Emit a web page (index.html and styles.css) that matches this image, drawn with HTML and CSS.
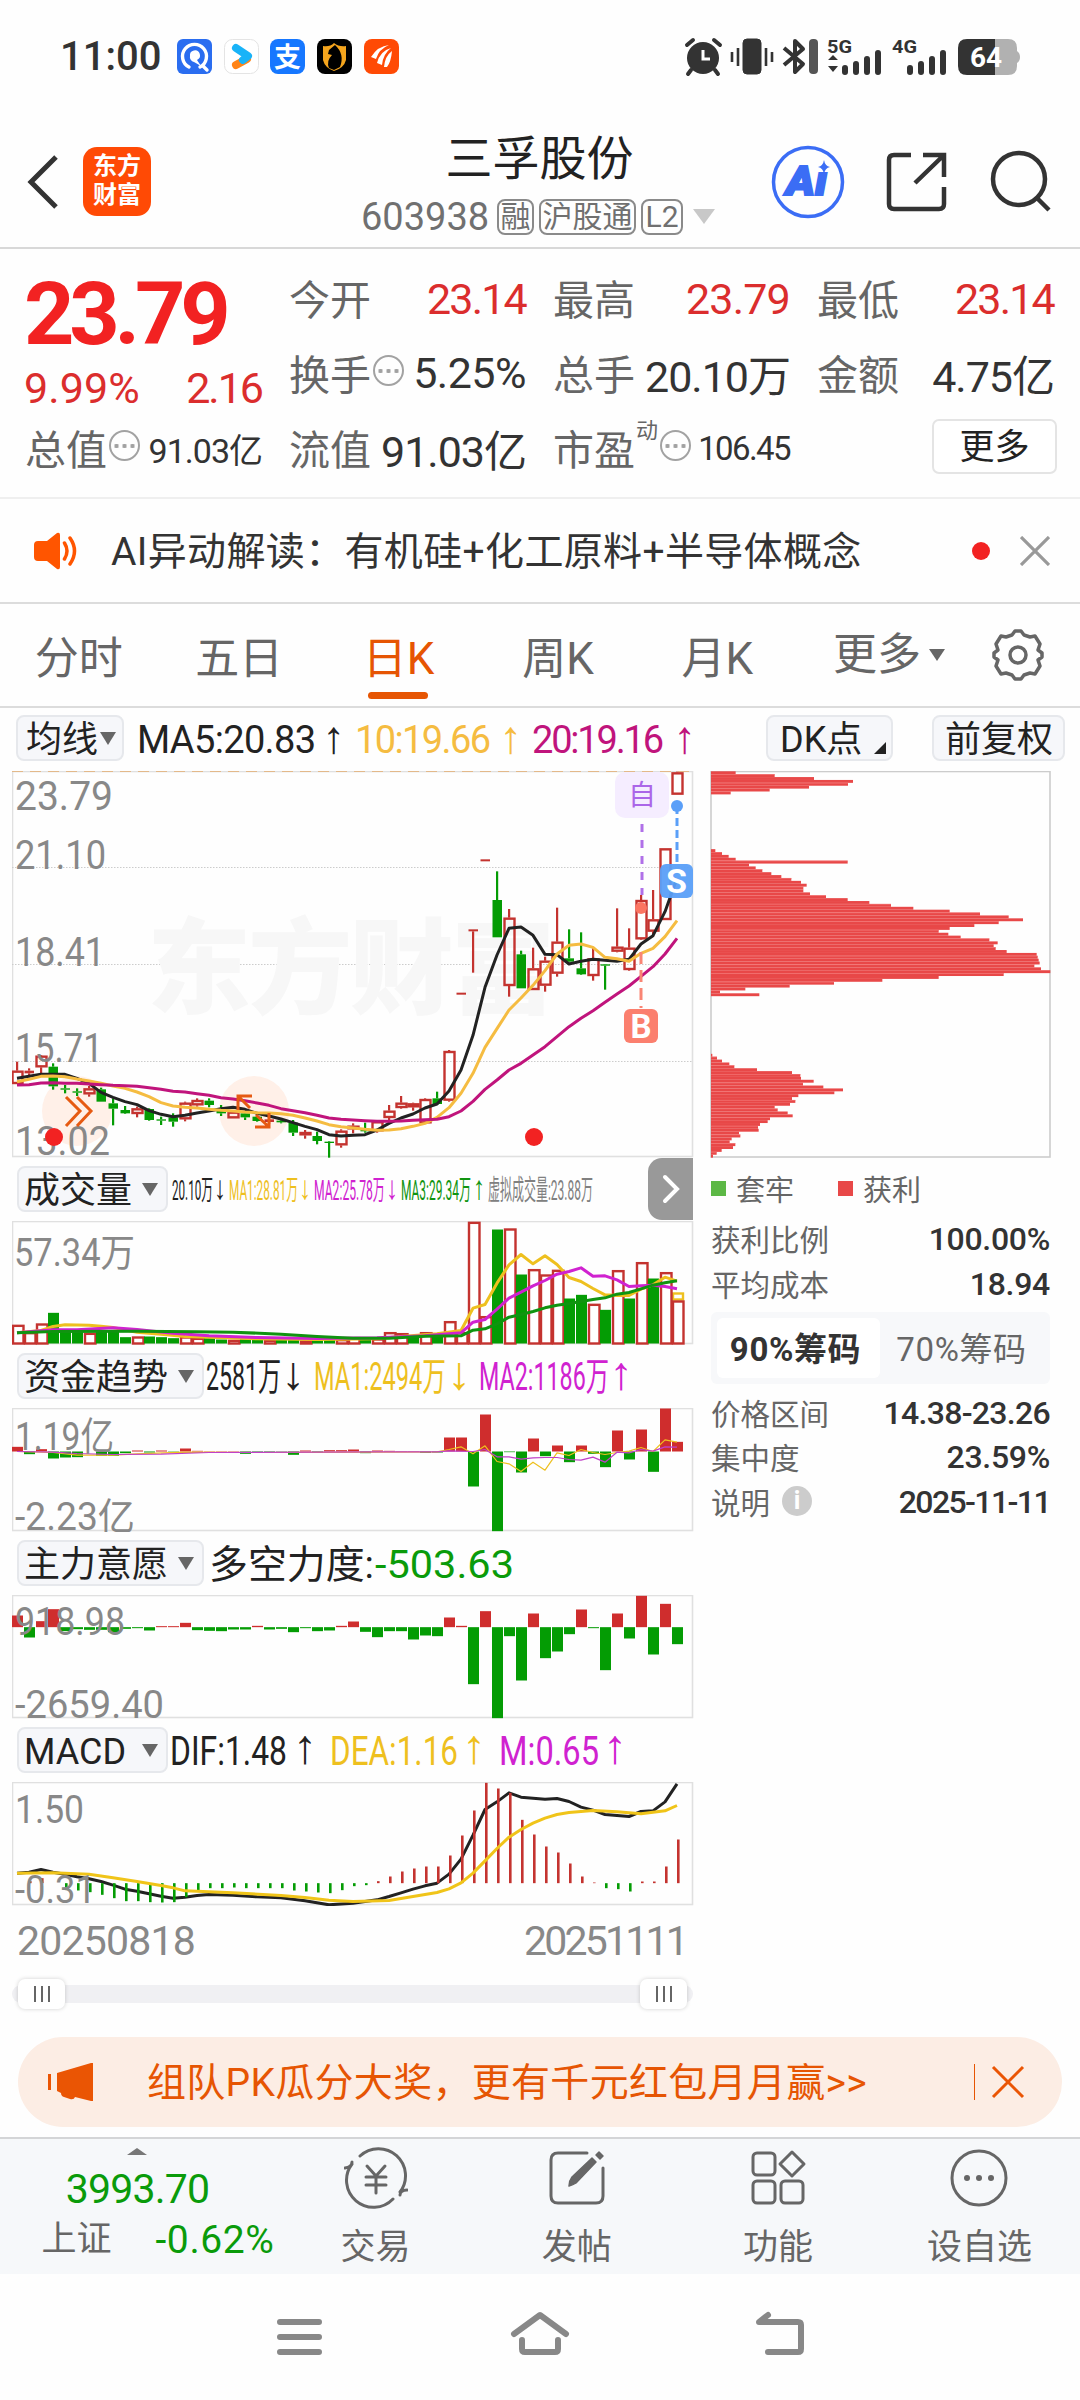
FILE: index.html
```html
<!DOCTYPE html>
<html lang="zh-CN">

<head>
    <meta charset="UTF-8">
    <meta name="viewport" content="width=device-width, initial-scale=1.0">
    <title>三孚股份 603938</title>
    <link rel="stylesheet" href="styles.css">
</head>

<body>
    <!-- phone status bar -->
    <section class="status">
        <span class="clock">11:00</span>
        <svg class="status-apps" viewBox="170 30 240 55">
            <rect x="177" y="39" width="35" height="35" rx="6" fill="#2a6df0" />
            <path d="M189 67A12 12 0 1 1 200 67M203 66l4 4" fill="none" stroke="#fff" stroke-width="3.4" stroke-linecap="round" />
            <path d="M190 56a5 5 0 1 1 7 4l4 6-7-4a5 5 0 0 1-4-6z" fill="#fff" />
            <rect x="224.500" y="39.500" width="34" height="34" rx="8" fill="#fff" stroke="#e4e4e4" />
            <path d="M236 65l11-6" stroke="#ff8417" stroke-width="8" stroke-linecap="round" />
            <path d="M236 48l12 8-5 4" stroke="#19b3f8" stroke-width="8" stroke-linecap="round" stroke-linejoin="round" fill="none" />
            <rect x="270" y="39" width="35" height="35" rx="8" fill="#1677ff" />
            <text x="287.500" y="67" font-size="27" font-weight="bold" fill="#fff" text-anchor="middle">支</text>
            <rect x="317" y="39" width="35" height="35" rx="8" fill="#000" />
            <path d="M323 46q7 1 11-3 5 4 12 3v14q-2 8-12 11-9-3-11-11z" fill="#f5a51d" />
            <path d="M335 45l-6 5-1 4 4 1q-6 6-3 13l5 2 6-3q5-13-5-22z" fill="#000" />
            <rect x="364" y="39" width="35" height="35" rx="8" fill="#ff4a05" />
            <path d="M371 57q7-11 18-12-10 4-13 14zM377 63q3-12 14-15-8 6-9 17zM384 67q1-11 8-16-1 11-5 16z" fill="#fff" />
        </svg>
        <svg class="status-icons" viewBox="680 30 350 55">
            <g stroke="#333" fill="#333">
                <circle cx="703" cy="58" r="16" stroke="none" />
                <path d="M687 45l6-5M720 45l-6-5M691 70l-3 4M715 70l3 4" stroke-width="4" stroke-linecap="round" />
                <path d="M703 50v9h7" stroke="#fff" stroke-width="3" fill="none" />
                <rect x="743" y="39" width="18" height="35" rx="4" />
                <path d="M732 52v10M738 48v18M766 48v18M772 52v10" stroke-width="2.600" />
                <path d="M784 48l19 16-8 8V41l8 8-19 16" fill="none" stroke-width="4" stroke-linejoin="round" />
                <rect x="809" y="39" width="9" height="35" rx="4" fill="#555" stroke="none" />
                <path d="M828 60l5-5 5 5zM828 66l5 6 5-6z" stroke="none" />
                <path d="M845 68v4M856 64v8M867 59v13M878 53v19M910 68v4M921 64v8M932 59v13M943 53v19" stroke-width="6" stroke-linecap="round" />
            </g>
            <text class="net" x="827" y="53" textLength="25" lengthAdjust="spacingAndGlyphs">5G</text>
            <text class="net" x="892" y="53" textLength="25" lengthAdjust="spacingAndGlyphs">4G</text>
            <path d="M995 39h13q9 0 9 9v3q3 2 3 6t-3 6v3q0 9-9 9h-13z" fill="#b1b1b1" />
            <path d="M967 39h28v36h-28q-9 0-9-9V48q0-9 9-9z" fill="#333" />
            <text x="970" y="67" font-size="28" font-weight="bold" fill="#fff" textLength="32">64</text>
        </svg>
    </section>

    <!-- stock title -->
    <header class="header">
        <svg class="back" viewBox="0 0 32 54"><path d="M29 2L4 27l25 25" /></svg>
        <div class="logo"><span>东方</span><span>财富</span></div>
        <div class="title">
            <h1>三孚股份</h1>
            <div class="code">
                <span>603938</span><em>融</em><em>沪股通</em><em>L2</em><i></i>
            </div>
        </div>
        <svg class="header-icons" viewBox="765 140 300 85">
            <circle cx="808" cy="182" r="34.500" fill="none" stroke="#3b6df5" stroke-width="3.500" />
            <text x="786" y="195" font-size="40" font-weight="900" font-style="italic" fill="#3b6df5" stroke="#3b6df5" stroke-width="2" textLength="41" lengthAdjust="spacingAndGlyphs">Aı</text>
            <path d="M824 160q1 6 6 7-5 1-6 7-1-6-6-7 5-1 6-7z" fill="#3b6df5" />
            <g fill="none" stroke="#333" stroke-width="4.500">
                <path d="M911 155h-17q-5 0-5 5v44q0 5 5 5h45q5 0 5-5v-17M915 183l29-28M923 155h21v22" />
                <circle cx="1019" cy="179" r="26" />
                <path d="M1037 198l12 12" />
            </g>
        </svg>
    </header>

    <section class="quote">
        <div class="quote-main">
            <strong>23.79</strong>
            <p class="change"><span>9.99%</span><span>2.16</span></p>
            <div class="cell small"><label>总值</label><i class="tip"></i><span>91.03亿</span></div>
        </div>
        <div class="quote-grid">
            <div class="cell up"><label>今开</label><span>23.14</span></div>
            <div class="cell up high"><label>最高</label><span>23.79</span></div>
            <div class="cell up"><label>最低</label><span>23.14</span></div>
            <div class="cell"><label>换手</label><i class="tip"></i><span>5.25%</span></div>
            <div class="cell"><label>总手</label><span>20.10万</span></div>
            <div class="cell"><label>金额</label><span>4.75亿</span></div>
            <div class="cell"><label>流值</label><span>91.03亿</span></div>
            <div class="cell small pe"><label>市盈<sup>动</sup></label><i class="tip"></i><span>106.45</span></div>
            <div class="cell"><button class="more">更多</button></div>
        </div>
    </section>

    <section class="news">
        <svg width="48" height="40" viewBox="0 0 48 40">
            <path d="M5 10h9L24 2q3-1 3 2v32q0 3-3 2L14 30H5q-4 0-4-4V14q0-4 4-4z" fill="#ff5500" />
            <path d="M31.500 12q5 8 0 16M37 7q9 13 0 26" fill="none" stroke="#ff5500" stroke-width="3.500" stroke-linecap="round" />
        </svg>
        <p>AI异动解读：有机硅+化工原料+半导体概念</p>
        <i class="dot"></i>
        <svg width="30" height="30" viewBox="0 0 30 30"><path d="M1 1l28 28M29 1L1 29" stroke="#999" stroke-width="3.200" /></svg>
    </section>

    <nav class="periods">
        <a>分时</a>
        <a>五日</a>
        <a class="active">日K</a>
        <a>周K</a>
        <a>月K</a>
        <a class="drop">更多<i></i></a>
        <svg width="54" height="54" viewBox="-27 -27 54 54">
            <path d="M-6-20L-3-24H3L6-20L12-18L17-19L22-11L20-5L24-2V2L20 5L22 11L17 19L12 18L6 20L3 24H-3L-6 20L-12 18L-17 19L-22 11L-20 5L-24 2V-2L-20-5L-22-11L-17-19L-12-18Z" fill="none" stroke="#666" stroke-width="3.500" stroke-linejoin="round" />
            <circle r="8" fill="none" stroke="#666" stroke-width="3.500" />
        </svg>
    </nav>

    <section class="ma-row">
        <button class="pick tight">均线<i></i></button>
        <svg class="ma-legend" viewBox="130 708 570 62">
            <g font-size="38">
                <text x="137" y="753" textLength="179" fill="#222">MA5:20.83</text>
                <text class="ar" x="334" y="753" fill="#222">↑</text>
                <text x="355" y="753" textLength="136" fill="#f5bc41">10:19.66</text>
                <text class="ar" x="511" y="753" fill="#f5bc41">↑</text>
                <text x="532" y="753" textLength="132" fill="#c0147c">20:19.16</text>
                <text class="ar" x="685" y="753" fill="#c0147c">↑</text>
            </g>
        </svg>
        <button class="pick corner">DK点<i></i></button>
        <button class="pick plain">前复权</button>
    </section>

    <main class="board">
        <div class="charts">
            <svg id="kline" class="chart-main" viewBox="12 771 682 387"></svg>

            <div class="tool">
                <button class="pick w3">成交量<i></i></button>
                <svg class="legend" viewBox="169 1158 480 62">
                    <g font-size="28">
                        <text x="172" y="1200" textLength="41" lengthAdjust="spacingAndGlyphs" fill="#222">20.10万</text>
                        <text class="ar" x="220" y="1199" textLength="12" lengthAdjust="spacingAndGlyphs" fill="#222">↓</text>
                        <text x="229" y="1200" textLength="69" lengthAdjust="spacingAndGlyphs" fill="#eec01f">MA1:28.81万</text>
                        <text class="ar" x="305" y="1199" textLength="12" lengthAdjust="spacingAndGlyphs" fill="#eec01f">↓</text>
                        <text x="314" y="1200" textLength="71" lengthAdjust="spacingAndGlyphs" fill="#d022d0">MA2:25.78万</text>
                        <text class="ar" x="392" y="1199" textLength="12" lengthAdjust="spacingAndGlyphs" fill="#d022d0">↓</text>
                        <text x="401" y="1200" textLength="70" lengthAdjust="spacingAndGlyphs" fill="#109410">MA3:29.34万</text>
                        <text class="ar" x="479" y="1199" textLength="12" lengthAdjust="spacingAndGlyphs" fill="#109410">↑</text>
                        <text x="488" y="1200" textLength="105" lengthAdjust="spacingAndGlyphs" fill="#808080">虚拟成交量:23.88万</text>
                    </g>
                </svg>
                <div class="expand"><svg width="18" height="30" viewBox="0 0 18 30"><path d="M3 3l12 12L3 27" /></svg></div>
            </div>
            <svg id="volume" class="chart-sub" viewBox="12 1220.500 682 124"></svg>

            <div class="tool">
                <button class="pick w4">资金趋势<i></i></button>
                <svg class="legend" viewBox="205 1345 480 62">
                    <g font-size="39">
                        <text x="206" y="1390" textLength="75" lengthAdjust="spacingAndGlyphs" fill="#222">2581万</text>
                        <text class="ar" x="293" y="1389" fill="#222">↓</text>
                        <text x="314" y="1390" textLength="132" lengthAdjust="spacingAndGlyphs" fill="#eec01f">MA1:2494万</text>
                        <text class="ar" x="459" y="1389" fill="#eec01f">↓</text>
                        <text x="479" y="1390" textLength="130" lengthAdjust="spacingAndGlyphs" fill="#d022d0">MA2:1186万</text>
                        <text class="ar" x="621" y="1389" fill="#d022d0">↑</text>
                    </g>
                </svg>
            </div>
            <svg id="fund" class="chart-sub" viewBox="12 1407.500 682 124"></svg>

            <div class="tool">
                <button class="pick w4">主力意愿<i></i></button>
                <svg class="legend" viewBox="205 1532 480 62">
                    <g font-size="39">
                        <text x="209" y="1578" textLength="165" lengthAdjust="spacingAndGlyphs" fill="#222">多空力度:</text>
                        <text x="375" y="1578" textLength="139" lengthAdjust="spacingAndGlyphs" fill="#0a9b0a">-503.63</text>
                    </g>
                </svg>
            </div>
            <svg id="force" class="chart-sub" viewBox="12 1594.500 682 124"></svg>

            <div class="tool">
                <button class="pick w3">MACD<i></i></button>
                <svg class="legend" viewBox="169 1719 480 62">
                    <g font-size="40">
                        <text x="170" y="1765" textLength="117" lengthAdjust="spacingAndGlyphs" fill="#222">DIF:1.48</text>
                        <text class="ar" x="305" y="1763" fill="#222">↑</text>
                        <text x="330" y="1765" textLength="128" lengthAdjust="spacingAndGlyphs" fill="#eec01f">DEA:1.16</text>
                        <text class="ar" x="474" y="1763" fill="#eec01f">↑</text>
                        <text x="499" y="1765" textLength="100" lengthAdjust="spacingAndGlyphs" fill="#d022d0">M:0.65</text>
                        <text class="ar" x="615" y="1763" fill="#d022d0">↑</text>
                    </g>
                </svg>
            </div>
            <svg id="macd" class="chart-sub" viewBox="12 1781.500 682 124"></svg>

            <div class="dates"><span>20250818</span><span>20251111</span></div>
            <div class="range">
                <div class="handle"><i></i><i></i><i></i></div>
                <div class="handle"><i></i><i></i><i></i></div>
            </div>
        </div>

        <aside class="chips">
            <svg id="chips" viewBox="710 771 342 387"></svg>
            <div class="chip-legend"><i class="green"></i><span>套牢</span><i class="red"></i><span>获利</span></div>
            <div class="chip-row"><span>获利比例</span><b>100.00%</b></div>
            <div class="chip-row"><span>平均成本</span><b>18.94</b></div>
            <div class="toggle"><span class="on">90%筹码</span><span>70%筹码</span></div>
            <div class="chip-row"><span>价格区间</span><b>14.38-23.26</b></div>
            <div class="chip-row"><span>集中度</span><b>23.59%</b></div>
            <div class="chip-row"><span>说明<i class="info">i</i></span><b>2025-11-11</b></div>
        </aside>
    </main>

    <section class="promo">
        <svg width="48" height="42" viewBox="0 0 48 42">
            <path d="M10 12L44 2h2v38h-2l-16-4q-1 3-5 2l-6-2q-3-1-3-4l-4-2zM1 13h3v16H1z" fill="#ea5504" />
        </svg>
        <p>组队PK瓜分大奖，更有千元红包月月赢&gt;&gt;</p>
        <i></i>
        <svg width="34" height="34" viewBox="0 0 34 34"><path d="M2 2l30 30M32 2L2 32" stroke="#ea5504" stroke-width="3" /></svg>
    </section>

    <nav class="tabs">
        <div class="index">
            <i></i>
            <strong>3993.70</strong>
            <p><span>上证</span><b>-0.62%</b></p>
        </div>
        <a>
            <svg viewBox="-32 -32 64 64">
                <path d="M-16-22A27 27 0 0 1 24 14M17 21A27 27 0 0 1-24-14M-31-10q7-1 7-6M31 12q-7 0-7 5" />
                <path d="M-9-12L0-2 9-12M0-2V15M-10-1H10M-10 7H10" />
            </svg>
            交易
        </a>
        <a>
            <svg viewBox="-32 -32 64 64">
                <path d="M10-25H-19q-7 0-7 7V18q0 7 7 7H19q7 0 7-7V-10" />
                <path d="M-8 8q0-5 3-9L15-20l4 4-20 21q-3 2-7 3zM19-23l3-3 4 4-3 3z" fill="#666" stroke-width="1.500" />
            </svg>
            发帖
        </a>
        <a>
            <svg viewBox="-32 -32 64 64">
                <rect x="-25" y="-25" width="22" height="22" rx="4" />
                <rect x="-25" y="3" width="22" height="22" rx="4" />
                <rect x="3" y="3" width="22" height="22" rx="4" />
                <path d="M14-26L26-14 14-2 2-14z" />
            </svg>
            功能
        </a>
        <a>
            <svg viewBox="-32 -32 64 64">
                <circle r="27" />
                <g fill="#666" stroke="none"><circle cx="-12" r="3" /><circle r="3" /><circle cx="12" r="3" /></g>
            </svg>
            设自选
        </a>
    </nav>

    <!-- system buttons -->
    <section class="sysnav">
        <svg viewBox="260 2300 560 70">
            <path d="M280 2322h39M280 2337h39M280 2352h39" />
            <path d="M514 2334l26-19 26 19M522 2340v9q0 3 3 3h30q3 0 3-3v-9" />
            <path d="M768 2352h30q3 0 3-3v-24q0-3-3-3h-39l9-7" />
        </svg>
    </section>

    <script src="charts.js"></script>
</body>

</html>
```

FILE: styles.css
```css
* {
    box-sizing: border-box;
    margin: 0;
    padding: 0;
}

body {
    width: 1080px;
    height: 2400px;
    background: #fefefe;
    color: #333;
    font-family: Roboto, "Noto Sans CJK SC", sans-serif;
    overflow: hidden;
}

svg {
    display: block;
    flex: none;
}

button {
    font-family: inherit;
    color: #222;
}

i,
em {
    font-style: normal;
}

/* status bar */
.status {
    height: 112px;
    display: flex;
    align-items: flex-start;
    padding: 30px 50px 0 60px;
}

.clock {
    width: 110px;
    font-size: 40px;
    line-height: 54px;
    font-weight: 500;
}

.status-apps {
    width: 240px;
    height: 55px;
}

.status-icons {
    width: 350px;
    height: 55px;
    margin-left: auto;
}

.net {
    font-size: 19px;
    font-weight: bold;
    fill: #333;
}

/* header */
.header {
    height: 137px;
    display: flex;
    align-items: flex-start;
    border-bottom: 2px solid #d8d8d8;
}

.back {
    width: 32px;
    height: 54px;
    margin: 43px 24px 0 27px;
}

.back path {
    fill: none;
    stroke: #333;
    stroke-width: 5;
}

.logo {
    width: 68px;
    height: 69px;
    margin-top: 35px;
    padding-top: 5px;
    border-radius: 14px;
    background: #ff4a05;
    color: #fff;
    font-size: 24px;
    line-height: 29px;
    font-weight: bold;
    display: flex;
    flex-direction: column;
    align-items: center;
}

.title {
    flex: none;
    width: 357px;
    margin-left: 210px;
    padding-top: 17px;
}

.title h1 {
    text-align: center;
    font-size: 47px;
    line-height: 60px;
    font-weight: 400;
    color: #222;
}

.code {
    display: flex;
    align-items: center;
    gap: 5px;
    height: 55px;
    color: #707070;
    font-size: 38px;
}

.code span {
    width: 131px;
}

.code em {
    flex: none;
    width: 37px;
    height: 36px;
    border: 2px solid #8a8a8a;
    border-radius: 8px;
    font-size: 30px;
    line-height: 32px;
    text-align: center;
    white-space: nowrap;
}

.code em:nth-of-type(2) {
    width: 97px;
}

.code em:nth-of-type(3) {
    width: 42px;
}

.code i {
    margin-left: 5px;
    border: 11px solid transparent;
    border-top: 15px solid #c8c8c8;
    border-bottom: 0;
}

.header-icons {
    width: 300px;
    height: 85px;
    margin: 28px 0 0 47px;
}

/* quote */
.quote {
    height: 250px;
    display: flex;
    gap: 27px;
    padding: 10px 26px 0;
    border-bottom: 2px solid #efefef;
}

.quote-main {
    width: 237px;
}

.quote-main strong {
    display: block;
    height: 104px;
    line-height: 110px;
    margin-left: -2px;
    font-size: 88px;
    font-weight: 700;
    letter-spacing: -5.2px;
    color: #f22222;
}

.change {
    display: flex;
    justify-content: space-between;
    height: 49px;
    line-height: 51px;
    margin-left: -2px;
    font-size: 43px;
    letter-spacing: 0.1px;
    color: #db2d2d;
}

.change span:last-child {
    letter-spacing: -2px;
}

.quote-grid {
    display: grid;
    grid-template-columns: repeat(3, 237px);
    grid-auto-rows: 75px;
    column-gap: 27px;
}

.cell {
    display: flex;
    align-items: center;
    height: 75px;
}

.quote-main .cell {
    margin-top: -3px;
}

.cell label {
    font-size: 41px;
    color: #666;
    white-space: nowrap;
}

.quote-main label {
    margin-left: -1px;
}

.cell span {
    margin: 3px 0 0 auto;
    font-size: 43px;
    letter-spacing: -1px;
    white-space: nowrap;
}

.cell.up span {
    margin-top: 5px;
    color: #db2d2d;
    letter-spacing: -1.8px;
}

.cell.high span {
    letter-spacing: -0.8px;
}

.cell .tip + span {
    letter-spacing: -0.5px;
}

.cell.small .tip + span {
    font-size: 34px;
    letter-spacing: -1px;
}

.cell.pe .tip + span {
    font-size: 33px;
    letter-spacing: -1.6px;
}

.pe label {
    position: relative;
}

.pe sup {
    position: absolute;
    left: 83px;
    top: 1px;
    font-size: 22px;
    line-height: 26px;
}

.pe .tip {
    margin-left: 25px;
}

.tip {
    flex: none;
    width: 31px;
    height: 31px;
    margin: -2px 0 0 2px;
    border: 2.5px solid #a2a2a2;
    border-radius: 50%;
    background: radial-gradient(circle, #a2a2a2 2px, transparent 2.5px) center / 8px 26px repeat-x content-box;
    padding: 0 1px;
}

.more {
    margin-left: auto;
    margin-right: -3px;
    width: 125px;
    height: 55px;
    padding-top: 2px;
    border: 2px solid #e4e4e4;
    border-radius: 7px;
    background: #fff;
    font-size: 35px;
    line-height: 50px;
}

/* news line */
.news {
    height: 105px;
    display: flex;
    align-items: center;
    padding: 0 30px 0 33px;
    border-bottom: 2px solid #dcdcdc;
}

.news p {
    margin: 2px 0 0 30px;
    font-size: 39px;
    line-height: 50px;
    letter-spacing: 0.35px;
    white-space: nowrap;
}

.dot {
    width: 18px;
    height: 18px;
    margin-left: auto;
    margin-right: 30px;
    border-radius: 50%;
    background: #f22222;
}

/* period tabs */
.periods {
    height: 104px;
    display: flex;
    align-items: center;
    padding: 0 35px 0 0;
    border-bottom: 2px solid #dcdcdc;
    font-size: 44px;
    color: #666;
}

.periods a {
    width: 159.5px;
    height: 102px;
    line-height: 111px;
    text-align: center;
    position: relative;
}

.periods a:first-child {
    padding-right: 2px;
}

.periods .active {
    color: #e65503;
}

.periods .active::after {
    content: "";
    position: absolute;
    left: 49px;
    bottom: 7px;
    width: 60px;
    height: 7px;
    border-radius: 4px;
    background: #e65503;
}

.periods .drop {
    width: 194px;
    padding-right: 10px;
    display: flex;
    align-items: center;
    justify-content: center;
    gap: 8px;
}

.drop i {
    border: 8px solid transparent;
    border-top: 12px solid #666;
    border-bottom: 0;
}

/* button chips shared by all chart rows */
.pick {
    height: 46px;
    padding: 3px 8px 0 5px;
    border: 2px solid #e6e8ec;
    border-radius: 8px;
    background: #f6f7fa;
    font-size: 36px;
    line-height: 40px;
    white-space: nowrap;
    display: flex;
    align-items: center;
    flex: none;
}

.pick i {
    margin: -2px 0 0 auto;
    border: 8px solid transparent;
    border-top: 13px solid #666;
    border-bottom: 0;
}

.ma-row {
    height: 63px;
    display: flex;
    align-items: flex-start;
    padding: 7px 0 0 16px;
}

.tight {
    width: 108px;
    padding: 3px 6px 0 8px;
}

.w3 {
    width: 151px;
}

.w4 {
    width: 187px;
}

.ma-legend {
    width: 570px;
    height: 62px;
    margin: -7px 0 0 6px;
}

.corner {
    width: 127px;
    margin-left: 66px;
    padding: 3px 5px 0 12px;
}

.corner i {
    margin: 17px 0 0 auto;
    border: 0;
    border-left: 12px solid transparent;
    border-bottom: 12px solid #222;
}

.plain {
    width: 133px;
    margin-left: 39px;
    padding-left: 11px;
}

/* trend arrows */
.ar {
    font-family: "Liberation Sans", sans-serif;
    font-size: 1.2em;
    text-anchor: middle;
}

/* chart board */
.board {
    height: 1252px;
    display: flex;
    gap: 16px;
    padding-left: 12px;
}

.charts {
    width: 682px;
}

.chart-main {
    width: 682px;
    height: 387px;
}

.chart-sub {
    width: 682px;
    height: 124px;
}

.tool {
    height: 63px;
    display: flex;
    align-items: flex-start;
    padding-left: 5px;
}

.tool .pick {
    margin-top: 8px;
}

.legend {
    width: 480px;
    height: 62px;
    margin-left: 1px;
}

.expand {
    flex: none;
    width: 45px;
    height: 62px;
    margin-left: -1px;
    border-radius: 14px 0 0 14px;
    background: #999;
    display: flex;
    align-items: center;
    justify-content: center;
}

.expand path {
    fill: none;
    stroke: #fff;
    stroke-width: 4;
    stroke-linecap: round;
}

.axis {
    fill: #888;
}

.dates {
    height: 70px;
    display: flex;
    justify-content: space-between;
    padding: 0 5px 0 5px;
    font-size: 41px;
    line-height: 70px;
    letter-spacing: -0.8px;
    color: #888;
}

.dates span:last-child {
    margin-right: 3px;
    letter-spacing: -2.8px;
}

.range {
    height: 18px;
    margin: 9px 1px 0 0;
    padding: 0 6px;
    border-radius: 9px;
    background: #f0f0f3;
    display: flex;
    align-items: center;
    justify-content: space-between;
}

.handle {
    width: 47px;
    height: 30px;
    border-radius: 7px;
    background: #fff;
    box-shadow: 0 0 4px rgba(0, 0, 0, 0.18);
    display: flex;
    align-items: center;
    justify-content: center;
    gap: 5px;
}

.handle i {
    width: 2px;
    height: 16px;
    background: #666;
}

/* chip distribution */
.chips {
    width: 342px;
}

.chips > svg {
    width: 342px;
    height: 387px;
}

.chip-legend {
    height: 59px;
    display: flex;
    align-items: center;
    padding-left: 1px;
    font-size: 29px;
    color: #666;
}

.chip-legend i {
    width: 15px;
    height: 15px;
    margin-top: 2px;
    margin-right: 10px;
}

.chip-legend span {
    width: 102px;
}

.green {
    background: #5cb845;
}

.red {
    background: #e84848;
}

.chip-row {
    height: 44.4px;
    display: flex;
    align-items: center;
    justify-content: space-between;
    padding: 0 2px 0 1px;
    font-size: 29.5px;
    color: #666;
}

.chip-row span {
    display: flex;
    align-items: center;
}

.chip-row b {
    margin-top: 2px;
    font-size: 32px;
    font-weight: 500;
    letter-spacing: -0.3px;
    color: #333;
}

.chip-row:nth-of-type(5) b {
    letter-spacing: -0.7px;
}

.chip-row:nth-of-type(7) b {
    letter-spacing: -1.6px;
}

.chip-row:nth-of-type(2),
.chip-row:nth-of-type(3) {
    position: relative;
    top: -1px;
}

.toggle {
    height: 72px;
    width: 339px;
    margin: 6px 0 6px 1px;
    padding: 6px;
    border-radius: 6px;
    background: #f7f8fa;
    display: flex;
    font-size: 33px;
    line-height: 63px;
    text-align: center;
    color: #666;
}

.toggle span {
    width: 163px;
    height: 60px;
    letter-spacing: 0.6px;
}

.toggle .on {
    padding-right: 6px;
    border-radius: 6px;
    background: #fff;
    font-weight: 700;
    color: #333;
}

.info {
    width: 30px;
    height: 30px;
    margin-left: 12px;
    border-radius: 50%;
    background: #ccc;
    color: #fff;
    font-size: 25px;
    font-weight: bold;
    line-height: 30px;
    text-align: center;
}

/* promo banner */
.promo {
    width: 1044px;
    height: 90px;
    margin: 14px 18px 10px;
    padding: 0 37px 0 29px;
    border-radius: 45px;
    background: #fcede4;
    color: #e65503;
    display: flex;
    align-items: center;
}

.promo p {
    margin: 1px 0 0 52px;
    font-size: 39px;
    line-height: 50px;
    letter-spacing: 0.3px;
    white-space: nowrap;
}

.promo i {
    width: 1.5px;
    height: 36px;
    margin: 0 16px 0 auto;
    background: #e65503;
}

/* bottom tabs */
.tabs {
    height: 137px;
    display: flex;
    border-top: 2px solid #d4d5d7;
    background: #f6f8fa;
    color: #666;
    font-size: 35px;
}

.index {
    width: 275px;
    display: flex;
    flex-direction: column;
    align-items: center;
    color: #0a9b0a;
}

.index > i {
    margin-top: 9px;
    border: 10px solid transparent;
    border-bottom: 7px solid #777;
    border-top: 0;
}

.index strong {
    margin-top: 11px;
    font-size: 41px;
    line-height: 46px;
    font-weight: 400;
    letter-spacing: -0.8px;
}

.index p {
    width: 233px;
    margin-left: 41px;
    margin-top: 6px;
    display: flex;
    align-items: center;
    justify-content: space-between;
    line-height: 44px;
}

.index span {
    color: #666;
}

.index b {
    font-weight: 400;
    font-size: 39px;
    letter-spacing: 0.6px;
}

.tabs a {
    width: 201.3px;
    display: flex;
    flex-direction: column;
    align-items: center;
    line-height: 75px;
}

.tabs svg {
    width: 64px;
    height: 64px;
    margin-top: 7px;
    fill: none;
    stroke: #666;
    stroke-width: 3;
    stroke-linecap: round;
    stroke-linejoin: round;
}

.sysnav {
    padding: 26px 0 0 260px;
}

.sysnav svg {
    width: 560px;
    height: 70px;
    fill: none;
    stroke: #888;
    stroke-width: 6;
    stroke-linecap: round;
    stroke-linejoin: round;
}
```

FILE: charts.js
```js
const RED = '#c4332f', GREEN = '#049c04';
const X = i => 17 + i * 12;

const rect = (x, y, w, h, fill, stroke) =>
    `<rect x="${x}" y="${y}" width="${w}" height="${h}" fill="${fill}"${stroke ? ` stroke="${stroke}" stroke-width="2.4"` : ''}/>`;
const line = (pts, color, w) =>
    `<polyline points="${pts.map(p => X(p[0]) + ',' + p[1]).join(' ')}" fill="none" stroke="${color}" stroke-width="${w}" stroke-linejoin="round"/>`;
const label = (x, y, size, w, text) =>
    `<text class="axis" x="${x}" y="${y}" font-size="${size}" textLength="${w}" lengthAdjust="spacingAndGlyphs">${text}</text>`;
const frame = (y, h) => `<rect x="12.5" y="${y + 0.5}" width="680" height="${h - 1}" fill="none" stroke="#e0e0e0" stroke-width="1.6"/>`;
// all series are stored in thirds of a pixel below a panel offset
const scale = (pts, top) => pts.map(p => [p[0], top + p[1] / 3]);
const draw = (id, html) => document.getElementById(id).innerHTML = html;

// ---- k line: [color, high, body top, body bottom, low]
const candles = [
    ['r', 905, 932, 972, 972], ['r', 925, 932, 940, 950], ['r', 885, 887, 922, 940], ['g', 910, 920, 979, 989],
    ['g', 975, 985, 989, 1000], ['g', 985, 994, 998, 1008], ['r', 978, 985, 1003, 1010], ['g', 983, 988, 1025, 1025],
    ['g', 1015, 1030, 1046, 1096], ['g', 1038, 1050, 1060, 1062], ['r', 1040, 1045, 1062, 1072], ['g', 1045, 1047, 1080, 1082],
    ['g', 1070, 1078, 1082, 1095], ['g', 1060, 1072, 1085, 1100], ['r', 1025, 1028, 1078, 1084], ['r', 1015, 1020, 1036, 1040],
    ['g', 1015, 1022, 1035, 1042], ['g', 1035, 1052, 1060, 1068], ['r', 1050, 1055, 1075, 1075], ['g', 1055, 1060, 1072, 1080],
    ['g', 1062, 1070, 1083, 1085], ['r', 1075, 1078, 1086, 1092], ['g', 1078, 1082, 1087, 1090], ['g', 1080, 1088, 1118, 1128],
    ['r', 1110, 1116, 1126, 1136], ['g', 1115, 1128, 1143, 1153], ['g', 1143, 1145, 1149, 1193], ['r', 1108, 1112, 1156, 1163],
    ['r', 1090, 1097, 1108, 1120], ['g', 1088, 1110, 1114, 1118], ['r', 1080, 1084, 1114, 1118], ['r', 1035, 1052, 1074, 1080],
    ['r', 1008, 1028, 1044, 1046], ['r', 1028, 1030, 1042, 1052], ['r', 1015, 1017, 1090, 1092], ['g', 995, 1015, 1032, 1035],
    ['r', 870, 873, 1022, 1025], ['r', 698, 698, 704, 704], ['r', 508, 508, 514, 638], ['r', 298, 298, 304, 304],
    ['g', 334, 420, 532, 532], ['r', 447, 473, 678, 710], ['g', 572, 583, 685, 685], ['r', 563, 625, 690, 690],
    ['r', 590, 602, 677, 695], ['r', 443, 545, 641, 650], ['g', 508, 595, 605, 607], ['g', 517, 625, 643, 645],
    ['r', 563, 595, 648, 662], ['g', 612, 613, 617, 689], ['r', 445, 560, 575, 577], ['r', 505, 563, 630, 632],
    ['r', 405, 420, 538, 540], ['r', 390, 478, 515, 530], ['r', 265, 265, 480, 480], ['r', 35, 37, 104, 104]
];
const ma5 = [955, 949, 943, 943, 943, 955, 970, 997, 1012, 1025, 1034, 1052, 1063, 1070, 1066, 1059, 1053, 1046, 1042, 1048, 1060, 1068, 1077, 1088, 1099, 1109, 1124, 1128, 1126, 1124, 1110, 1090, 1074, 1062, 1044, 1032, 993, 930, 826, 682, 585, 505, 501, 526, 583, 584, 612, 604, 598, 601, 604, 598, 552, 527, 455, 355];
const ma10 = [965, 958, 949, 948, 950, 957, 963, 970, 978, 985, 996, 1010, 1028, 1038, 1042, 1044, 1048, 1051, 1053, 1056, 1058, 1059, 1061, 1066, 1074, 1083, 1094, 1100, 1104, 1108, 1111, 1110, 1106, 1099, 1090, 1072, 1043, 1000, 940, 862, 806, 750, 714, 676, 632, 582, 556, 552, 562, 592, 596, 604, 580, 565, 530, 482];
const ma20 = [975, 974, 969, 968, 970, 970, 972, 974, 976, 977, 979, 983, 988, 994, 996, 1001, 1006, 1013, 1017, 1022, 1029, 1036, 1046, 1052, 1058, 1066, 1074, 1078, 1080, 1082, 1084, 1084, 1083, 1081, 1079, 1078, 1070, 1053, 1024, 988, 960, 930, 910, 885, 860, 830, 800, 775, 752, 727, 702, 678, 649, 620, 582, 535];

let k = frame(771, 386);
k += '<path d="M12 771.500H694" stroke="#e3b98a" stroke-dasharray="11 7"/>';
k += '<path d="M12 867.500H693M12 964.500H693M12 1061.500H693" stroke="#ccc" stroke-dasharray="1.500 1.500"/>';
k += '<text x="147" y="1006" font-size="104" font-weight="900" fill="#f7f7f7" textLength="408">东方财富</text>';
k += '<circle cx="77" cy="1111" r="35" fill="#fff0e8"/><circle cx="254" cy="1111" r="35" fill="#fff0e8"/>';
candles.forEach((c, i) => {
    const [top, a, b, low] = c.slice(1).map(v => 760 + v / 3);
    const color = c[0] == 'r' ? RED : GREEN;
    k += rect(X(i) - 1, top, 2.2, Math.max(a - top, 0), color) + rect(X(i) - 1, b, 2.2, low - b, color);
    if (c[0] == 'g' || b - a < 3) k += rect(X(i) - 4.5, a, 9.5, b - a, color);
    else k += rect(X(i) - 4.5, a + 1, 10, b - a - 2, 'none', color);
});
const byIndex = a => scale(a.map((v, i) => [i, v]), 760);
k += line(byIndex(ma5), '#222', 3) + line(byIndex(ma10), '#f5bc41', 3) + line(byIndex(ma20), '#c0147c', 3);
k += label(15, 810, 40.5, 98, '23.79') + label(15, 869, 40.5, 91, '21.10') + label(15, 966, 40.5, 90, '18.41')
    + label(15, 1062, 40.5, 88, '15.71') + label(15, 1155, 40.5, 95, '13.02');
k += '<g fill="none" stroke="#e65a12" stroke-width="3"><path d="M66 1097l14 14-14 15M77 1097l14 14-14 15"/>'
    + '<path d="M238 1110v-14h14M239 1097l11 11M256 1115l13 12M255 1127h14v-14"/></g>';
k += '<circle cx="54" cy="1137" r="9" fill="#f22222"/><circle cx="534" cy="1137" r="9" fill="#f22222"/>';
// trade markers
k += '<rect x="615" y="772" width="54" height="46" rx="10" fill="#f5edff"/><text x="642" y="805" font-size="28" fill="#ab66e8" text-anchor="middle">自</text>';
k += '<path d="M642 824V895" stroke="#b070e8" stroke-width="3" stroke-dasharray="8 8"/>';
k += '<path d="M641 952V1008" stroke="#f98574" stroke-width="3" stroke-dasharray="12 6"/><circle cx="641" cy="908" r="6" fill="#fb7562"/>';
k += '<rect x="624" y="1009" width="34" height="34" rx="6" fill="#fb7f6e"/><text x="641" y="1037.500" font-size="33" font-weight="bold" fill="#fff" text-anchor="middle">B</text>';
k += '<path d="M677 806V862" stroke="#5a9ff8" stroke-width="3" stroke-dasharray="8 4"/><circle cx="677" cy="806" r="6" fill="#5a9ff8"/>';
k += '<rect x="660" y="864" width="33" height="34" rx="6" fill="#5a9ff8" fill-opacity=".95"/><text x="676.500" y="893" font-size="34" font-weight="bold" fill="#fff" text-anchor="middle">S</text>';
draw('kline', k);

// ---- volume
const volumes = [523, 545, 519, 487, 545, 545, 547, 540, 543, 560, 558, 558, 560, 563, 558, 562, 563, 567, 568, 566, 568, 568, 568, 566, 570, 570, 568, 566, 560, 566, 564, 545, 548, 556, 545, 556, 512, 545, 214, 497, 237, 234, 372, 356, 372, 358, 444, 433, 460, 478, 359, 444, 335, 384, 365, 450];
const isRed = [0, 1, 2, 6, 10, 14, 15, 18, 21, 24, 27, 28, 30, 31, 32, 34, 36, 37, 38, 39, 41, 43, 44, 45, 48, 50, 52, 54, 55];
let v = frame(1220.5, 123);
v += rect(X(55) - 4, 1293, 10, 6, 'none', '#eec01f');
volumes.forEach((t, i) => {
    const y = 1150 + t / 3;
    v += isRed.includes(i) ? rect(X(i) - 4, y + 1, 10.5, 1342 - y, '#fff', RED) : rect(X(i) - 5, y, 11, 1343 - y, GREEN);
});
v += line(scale([[0, 547], [2, 540], [3, 528], [4, 523], [6, 524], [7, 527], [8, 531], [10, 545], [12, 551], [14, 558], [16, 560], [20, 565], [25, 567], [30, 565], [32, 558], [35, 550], [37, 540], [38, 473], [39, 462], [40, 398], [41, 343], [42, 312], [43, 340], [44, 316], [45, 342], [46, 381], [47, 393], [48, 414], [49, 433], [50, 435], [51, 435], [52, 416], [53, 403], [54, 380], [55, 392]], 1150), '#eec01f', 3);
v += line(scale([[0, 547], [3, 538], [5, 538], [8, 532], [10, 537], [13, 548], [16, 556], [20, 561], [25, 564], [30, 562], [34, 556], [37, 547], [38, 515], [39, 507], [40, 476], [41, 443], [42, 425], [43, 406], [44, 390], [45, 371], [46, 363], [47, 352], [48, 377], [49, 376], [50, 388], [51, 408], [52, 406], [53, 404], [54, 408], [55, 415]], 1150), '#d022d0', 3);
v += line(scale([[0, 547], [3, 543], [10, 542], [15, 544], [18, 545], [22, 551], [25, 558], [28, 563], [31, 563], [34, 557], [37, 556], [38, 539], [39, 535], [40, 520], [41, 500], [42, 492], [43, 483], [44, 472], [45, 464], [46, 459], [47, 453], [48, 447], [49, 442], [50, 431], [51, 426], [52, 415], [53, 404], [54, 397], [55, 391]], 1150), '#109410', 3);
v += label(14, 1265, 38, 121, '57.34万');
draw('volume', v);

// bars hanging from a zero line
function bars(values, top, zero) {
    const z = top + zero / 3;
    return values.map((p, i) => {
        const y = top + p / 3;
        return y < z ? rect(X(i) - 5, y, 11, z - y, '#cf2d2d') : rect(X(i) - 5, z, 11, y - z, GREEN);
    }).join('');
}

const fund = [889, 911, 896, 924, 921, 920, 903, 916, 916, 908, 900, 906, 900, 904, 894, 901, 902, 902, 902, 910, 905, 905, 904, 913, 900, 906, 899, 899, 897, 908, 900, 901, 902, 902, 907, 906, 861, 861, 1008, 792, 1142, 905, 966, 864, 917, 885, 935, 885, 910, 950, 840, 927, 837, 964, 774, 874];
draw('fund', frame(1407.5, 123) + bars(fund, 1150, 903)
    + line(scale([[0, 903], [3, 906], [5, 914], [8, 914], [10, 910], [14, 905], [20, 906], [30, 905], [35, 904], [36, 897], [37, 889], [38, 910], [39, 886], [40, 933], [41, 940], [42, 963], [43, 935], [44, 959], [45, 907], [46, 915], [47, 897], [48, 906], [49, 912], [50, 906], [51, 902], [52, 891], [53, 903], [54, 868], [55, 875]], 1150), '#eec01f', 1.2)
    + line(scale([[0, 903], [3, 905], [5, 909], [8, 912], [12, 911], [16, 906], [30, 904], [35, 904], [36, 901], [38, 903], [39, 897], [40, 919], [41, 919], [42, 926], [43, 922], [44, 921], [45, 921], [46, 927], [47, 929], [48, 920], [49, 935], [50, 905], [51, 907], [52, 897], [53, 902], [54, 889], [55, 890]], 1150), '#c040c8', 1.2)
    + label(15, 1449, 39, 99, '1.19亿') + label(15, 1529, 38, 120, '-2.23亿'));

const force = [225, 291, 242, 206, 272, 266, 268, 268, 275, 265, 263, 270, 257, 257, 247, 269, 271, 272, 267, 267, 256, 267, 265, 275, 263, 272, 270, 256, 243, 274, 290, 272, 272, 297, 285, 287, 231, 256, 431, 212, 533, 287, 420, 219, 353, 333, 281, 207, 263, 389, 219, 294, 166, 342, 190, 311];
draw('force', frame(1594.5, 123) + bars(force, 1540, 260)
    + label(15, 1634, 38, 110, '918.98') + label(15, 1717, 38, 149, '-2659.40'));

// ---- macd
const macd = [1028, 1022, 1013, 1028, 1040, 1050, 1055, 1063, 1073, 1082, 1082, 1085, 1086, 1085, 1070, 1050, 1043, 1043, 1041, 1043, 1043, 1043, 1043, 1050, 1053, 1056, 1058, 1049, 1037, 1034, 1022, 1008, 993, 984, 978, 978, 945, 885, 810, 727, 744, 757, 838, 882, 918, 936, 969, 1008, 1026, 1043, 1046, 1053, 1023, 1023, 978, 897];
let m = frame(1781.5, 123);
m += line(scale([[0, 998], [1, 995], [2, 987], [3, 995], [4, 1001], [5, 1009], [6, 1015], [7, 1023], [8, 1034], [9, 1046], [10, 1052], [11, 1060], [12, 1067], [13, 1073], [14, 1070], [15, 1065], [16, 1062], [18, 1064], [20, 1069], [22, 1072], [24, 1081], [26, 1093], [28, 1088], [30, 1078], [31, 1068], [32, 1057], [33, 1046], [34, 1036], [35, 1028], [36, 1001], [37, 956], [38, 884], [39, 807], [40, 784], [41, 757], [42, 770], [44, 776], [45, 774], [46, 783], [47, 800], [48, 809], [49, 822], [50, 825], [51, 828], [52, 813], [53, 811], [54, 784], [55, 730]], 1540), '#222', 3);
macd.forEach((p, i) => {
    const y = 1540 + p / 3, z = 1540 + 1028 / 3;
    m += y < z ? rect(X(i), y, 2.6, z - y, RED) : rect(X(i), z, 2.6, y - z, GREEN);
});
m += line(scale([[0, 998], [3, 997], [6, 1001], [8, 1012], [10, 1023], [12, 1035], [13, 1042], [14, 1051], [15, 1052], [18, 1057], [22, 1065], [24, 1071], [26, 1079], [28, 1083], [31, 1080], [33, 1068], [35, 1056], [36, 1045], [37, 1027], [38, 998], [39, 961], [40, 924], [41, 890], [42, 867], [43, 848], [44, 833], [45, 822], [46, 816], [48, 810], [50, 814], [52, 820], [54, 811], [55, 795]], 1540), '#f0c419', 3);
m += label(15, 1822, 38, 69, '1.50') + label(15, 1902, 38, 81, '-0.31');
draw('macd', m);

// ---- chip distribution, one row per price step; start row -> right edges
const groups = {
    0: [136, 253, 371, 488, 473, 356, 238, 121],
    27: [75, 95, 115, 136, 472, 176, 196, 216, 243, 273, 303, 332, 349, 339, 339, 359, 407, 472, 537, 602, 669, 778, 869, 955, 998, 925, 852, 778, 745, 774, 811, 897, 922, 910, 916, 949, 1039, 1042, 1045, 1048, 1032, 1052, 1080, 940, 745, 576, 431, 298, 165, 89, 207],
    98: [66, 80, 95, 117, 132, 200, 305, 330, 332, 370, 338, 399, 458, 432, 324, 305, 315, 299, 253, 262, 292, 307, 239, 232, 209, 203, 205, 146, 150, 124, 118, 135, 128, 94, 79, 68]
};
let c = '<rect x="711" y="771.5" width="339" height="385.5" fill="none" stroke="#ccc" stroke-width="1.6"/>';
for (const start in groups) {
    groups[start].forEach((r, i) => {
        const y = 771.3 + (+start + i) * 2.883;
        c += rect(711, y, (r - 62) / 3, 2.9, '#e84848');
        if (i % 3 == 1) c += rect(711, y, (r - 62) / 3, 0.6, '#f57a7a');
    });
}
draw('chips', c);
```
